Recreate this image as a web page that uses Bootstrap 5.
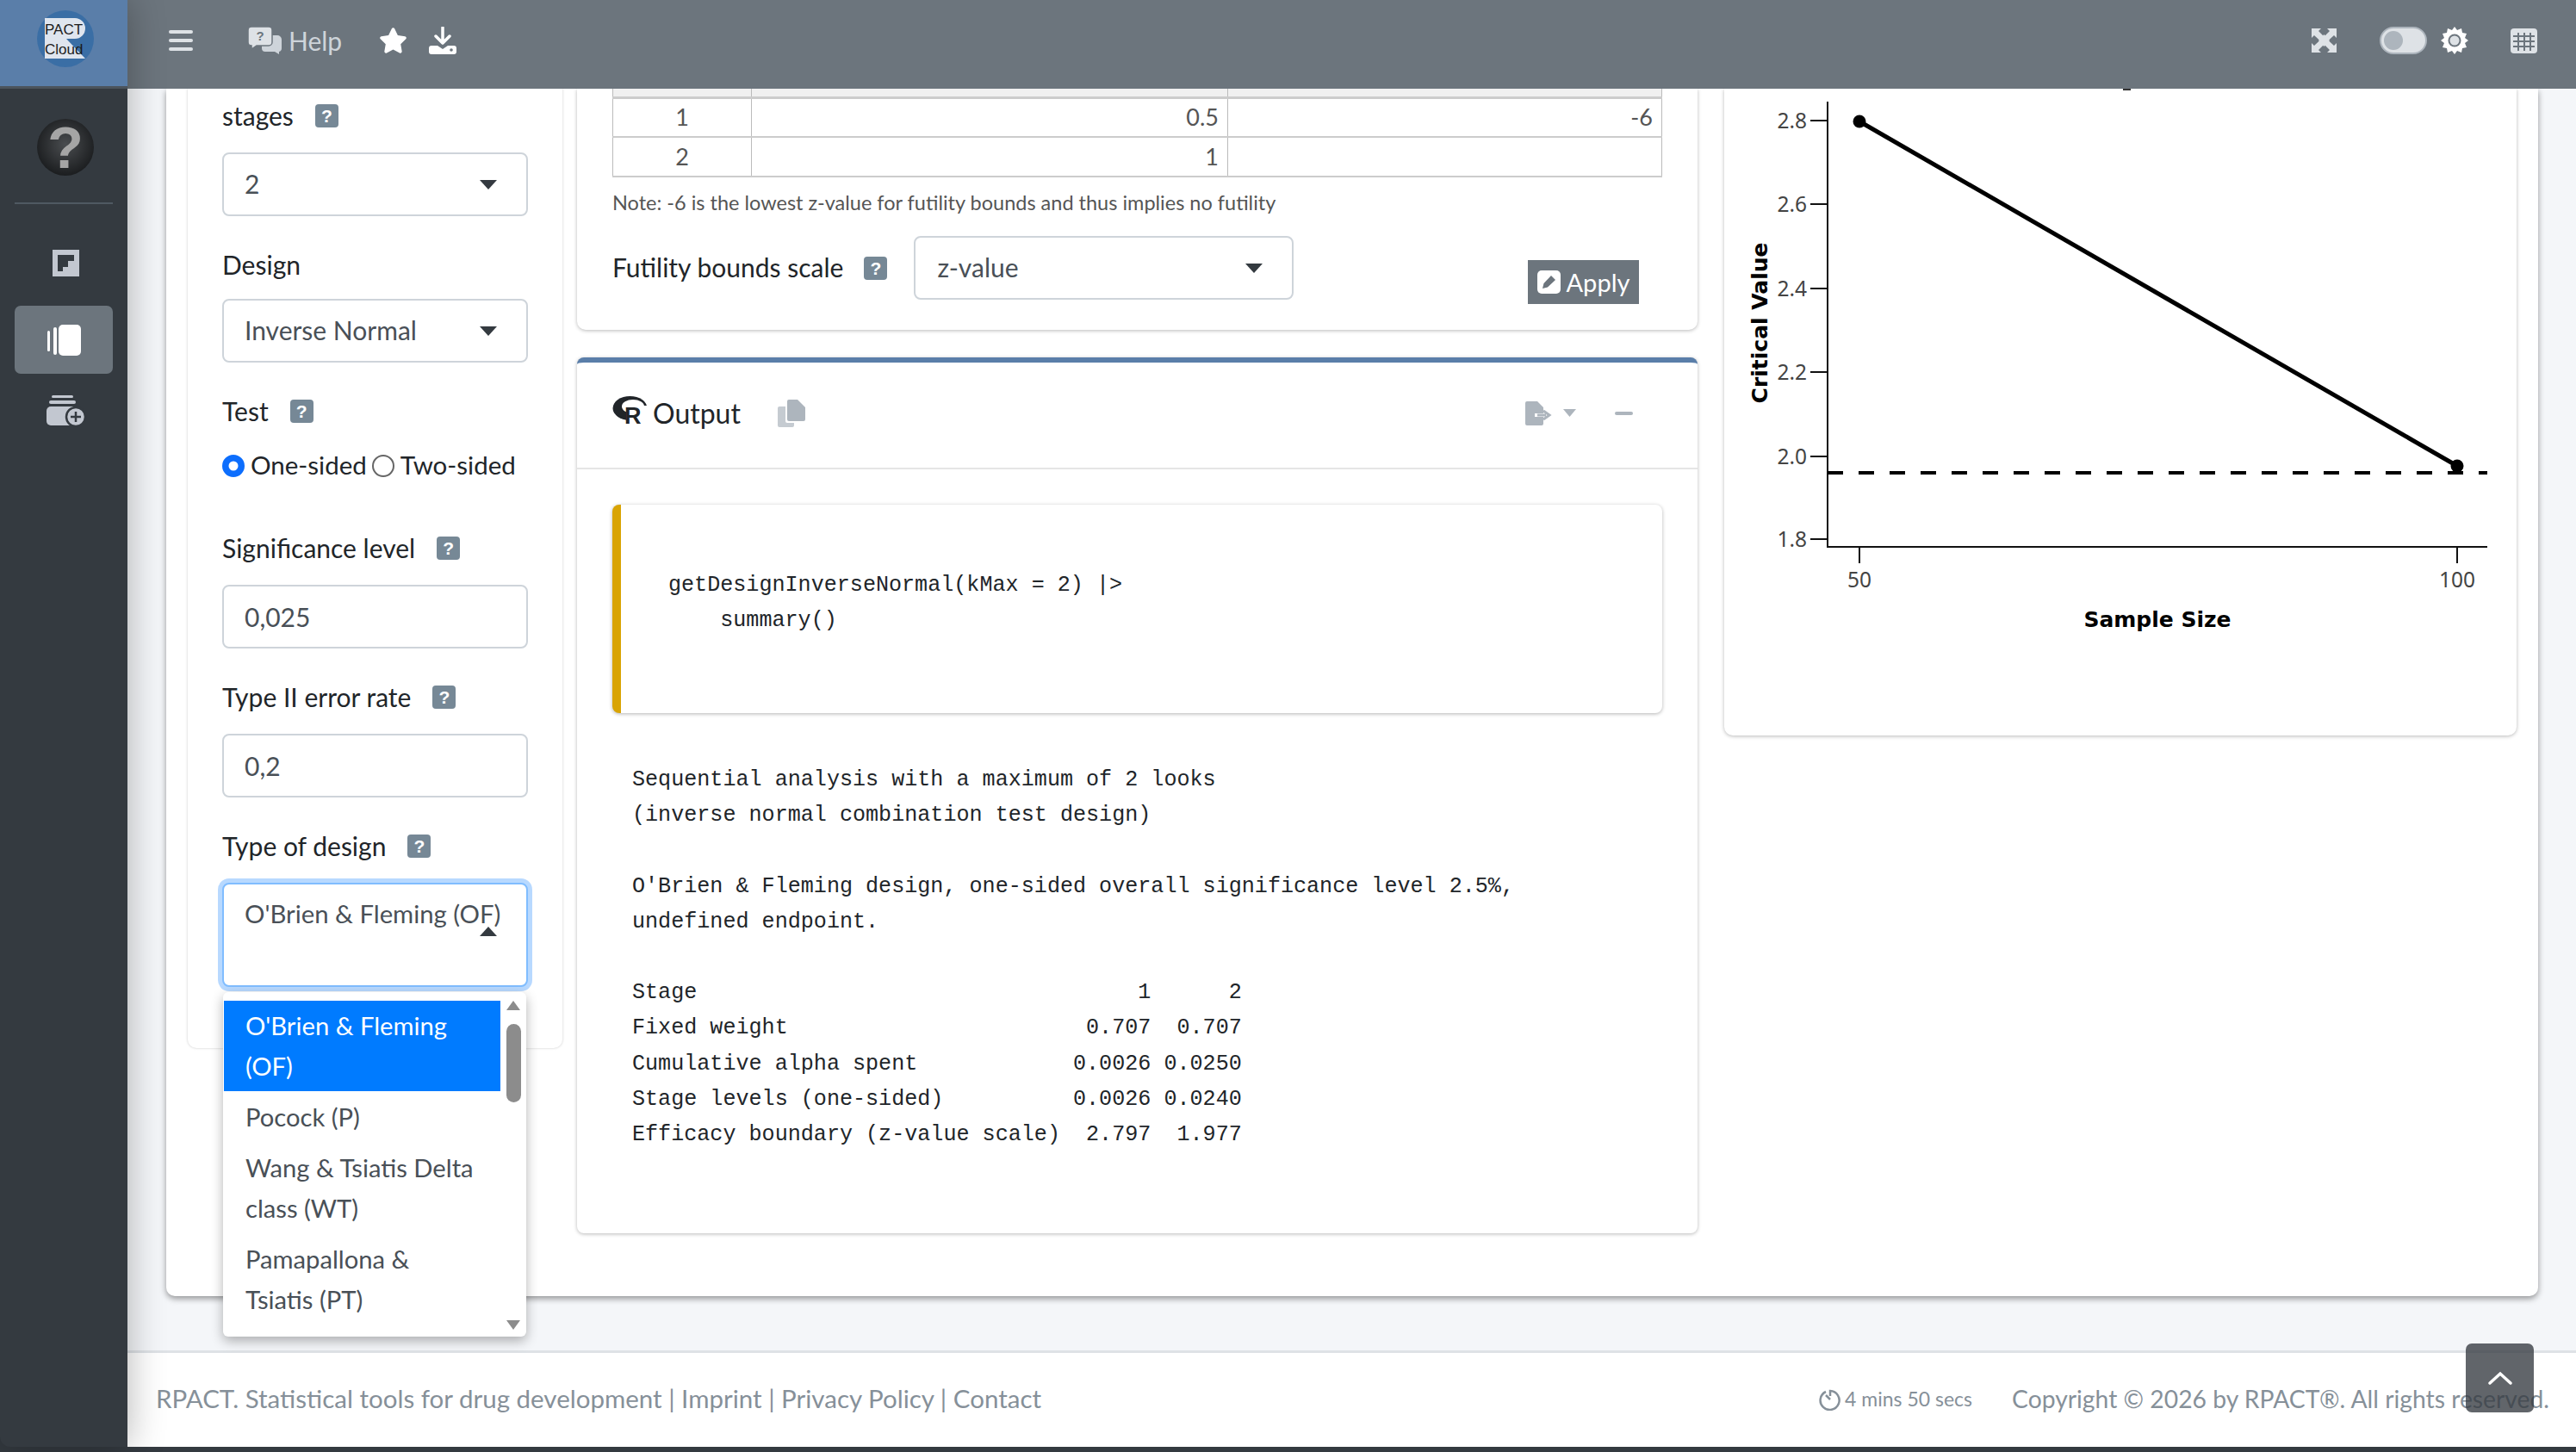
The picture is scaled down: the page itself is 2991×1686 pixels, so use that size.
<!DOCTYPE html>
<html lang="en">
<head>
<meta charset="utf-8">
<title>RPACT Cloud</title>
<link href="https://cdn.jsdelivr.net/npm/bootstrap@5.3.0/dist/css/bootstrap.min.css" rel="stylesheet">
<style>
html,body{height:100%;margin:0}
body{background:#343a40;overflow:hidden;font-family:"Lato","Noto Sans",sans-serif;font-size:30px;color:#212529}
.app-shell{height:1680px;width:2991px;position:relative}
.side-bar{width:148px;background:#343a40;border-bottom-left-radius:12px;z-index:5;box-shadow:0 0 44px rgba(0,0,0,.3)}
.logo-box{height:103px;background:#5a7ea9;border-bottom:3px solid #4b545c}
.side-sep{height:2px;background:#4f5962;margin:0 17px}
.side-pill{height:79px;margin:0 17px;background:#6c757d;border-radius:7px}
.main-col{width:2843px;background:#f4f6f9}
.top-bar{height:103px;background:#6c757d;padding:0 45px 9px 48px;z-index:4;color:#ced4da}
.top-bar span.help-text{font-size:30px;margin-left:7px}
.switch-track{width:55px;height:32px;border-radius:16px;background:#dee2e6;border:2px solid #adb5bd;padding:3px}
.switch-knob{width:22px;height:22px;border-radius:50%;background:#adb5bd}
.page-body{padding:0 44px 0 45px;height:1465px;flex:none}
.outer-card{height:1402px;background:#fff;border-radius:0 0 10px 10px;box-shadow:0 3px 7px rgba(0,0,0,.4);padding:0 25px}
.left-pane{width:435px;height:1114px;flex:none;margin-right:17px;background:#fff;border-radius:0 0 10px 10px;box-shadow:0 0 3px rgba(0,0,0,.22);padding:10px 40px 0;position:relative}
.mid-pane{width:1301px;flex:none;margin-right:31px}
.right-pane{width:920px;flex:none;height:751px;background:#fff;border-radius:0 0 10px 10px;box-shadow:0 1px 4px rgba(0,0,0,.28);position:relative}
.fld-label{height:44px;line-height:44px;margin-bottom:20px;display:flex;align-items:center;font-size:30px;padding-bottom:3px}
.fld-label.tight{margin-bottom:17px}
.fld-group{margin-bottom:35px}
.help-tag{width:27px;height:27px;margin-left:25px;background:#768896;color:#fff;border-radius:4px;font:700 21px/27px "Liberation Sans",sans-serif;text-align:center;flex:none;position:relative;top:1px}
.fld-box{display:block;height:74px;width:100%;border:2px solid #ced4da;border-radius:8px;background:#fff;color:#495057;font-size:30px;padding:0 24px;line-height:69px;position:relative}
.fld-box:focus{box-shadow:none;border-color:#ced4da;color:#495057}
.fld-caret::after{content:"";position:absolute;right:34px;top:30px;border:10px solid transparent;border-top:11px solid #343a40;border-bottom:0}
.fld-open{height:121px;border-color:#80bdff;box-shadow:0 0 0 5px #b8d9ff;line-height:1.3;padding-top:15px;font-size:29.300px}
.fld-open::after{content:"";position:absolute;right:34px;top:49px;border:10px solid transparent;border-bottom:11px solid #343a40;border-top:0}
.fld-radios{display:flex;align-items:center;height:44px;margin-bottom:51px;font-size:29.500px;padding-bottom:3px}
.fld-radios .form-check-input{width:26px;height:26px;margin:0 7px 0 0;flex:none;border:2px solid #666}
.fld-radios .form-check-input:checked{border-color:#0d6efd}
.fld-radios label{margin-right:6px}
.drop-menu{position:absolute;left:41px;top:1049px;width:352px;height:400px;background:#fff;border-radius:6px;box-shadow:0 5px 14px rgba(0,0,0,.3);padding-top:10px;z-index:6;font-size:29.200px;line-height:47px;color:#495057;overflow:hidden}
.drop-item{width:321px;padding:6px 24px 6px 25px;margin-left:1px}
.drop-item.on{background:#007bff;color:#fff;padding:5px 24px 6px 25px}
.drop-track{position:absolute;right:6px;top:8px;width:18px;height:384px}
.drop-thumb{position:absolute;left:1px;top:29px;width:17px;height:91px;border-radius:9px;background:#8c8c8c}
.tri-up,.tri-down{position:absolute;left:1px;border:8px solid transparent}
.tri-up{top:2px;border-bottom:11px solid #8c8c8c;border-top:0}
.tri-down{bottom:0;border-top:11px solid #8c8c8c;border-bottom:0}
.table-card{height:280px;background:#fff;border-radius:0 0 10px 10px;box-shadow:0 1px 4px rgba(0,0,0,.28);padding:0 42px 0 41px}
.bound-table{width:1218px;border-collapse:collapse;margin:0;color:#555;font-size:27px;table-layout:fixed}
.bound-table td{border:1px solid #bbb;border-bottom:2px solid #ccc;height:46px;padding:0 10px;line-height:40px}
.bound-table tr.head td{height:10px;background:#f0f0f0;padding:0;line-height:0;border-bottom:3px solid #ccc;border-top:0}
.note-line{font-size:23.500px;color:#555;margin:12px 0 0;line-height:34px}
.scale-row{margin-top:22px}
.scale-label{font-size:30px;margin-top:14px;display:flex;align-items:center;height:44px}
.scale-label .help-tag{margin-left:24px}
.scale-select{width:441px;margin-left:31px;padding:0 25px}
.apply-btn{margin-left:auto;margin-right:26px;margin-top:28px;height:51px;width:129px;background:#6c757d;color:#fff;border:0;border-radius:0;font-size:29px;padding:0;display:flex;align-items:center;justify-content:center;gap:7px;line-height:1}
.apply-btn:hover{background:#6c757d;color:#fff}
.out-card{margin-top:32px;height:1017px;background:#fff;border-top:6px solid #5a7ea9;border-radius:8px;box-shadow:0 1px 4px rgba(0,0,0,.28)}
.out-head{height:124px;border-bottom:2px solid #e5e5e5;padding:0 42px 5px 41px;font-size:32px}
.out-title{margin-left:6px;margin-right:43px}
.code-box{margin:41px 41px 0;height:242px;background:#fff;border-left:10px solid #d9a404;border-radius:8px;box-shadow:0 1px 4px rgba(0,0,0,.3);padding:73px 0 0 55px}
.mono-text{font-family:"Liberation Mono",monospace;font-size:25.100px;line-height:41.200px;margin:0;color:#212529;white-space:pre;overflow:visible}
.out-text{margin:57px 0 0 64px}
.bottom-bar{height:112px;background:#fff;border-top:3px solid #dee2e6;padding:0 31px 2px 33px;color:#869099;font-size:29.500px;flex:none}
.bottom-bar .run-time{font-size:23px;margin-left:auto;margin-right:46px}
.copy-note{font-size:28.300px}
.to-top{position:absolute;left:2863px;top:1560px;width:79px;height:80px;background:rgba(52,58,64,.78);border-radius:7px;z-index:7}
</style>
</head>
<body>
<div class="app-shell d-flex">
  <aside class="side-bar d-flex flex-column flex-none">
    <div class="logo-box d-flex align-items-center justify-content-center">
      <svg width="148" height="100" viewBox="0 0 148 100">
        <circle cx="76" cy="45" r="33" fill="#3a6ea5"/>
        <path d="M52 21H87A12 12 0 0 1 87 45H77L99 68H52Z" fill="#dfe5ee"/>
        <text x="52" y="40" font-family="Liberation Sans" font-size="17" fill="#1c1c1c">PACT</text>
        <text x="52" y="63" font-family="Liberation Sans" font-size="17" fill="#1c1c1c">Cloud</text>
      </svg>
    </div>
    <div class="d-flex justify-content-center mt-0">
      <svg width="148" height="132" viewBox="0 0 148 132" class="d-block">
        <defs><radialGradient id="ballg" cx=".5" cy=".45" r=".6"><stop offset="0" stop-color="#4a4d50"/><stop offset="1" stop-color="#17191b"/></radialGradient></defs>
        <ellipse cx="76" cy="68" rx="33" ry="33" fill="url(#ballg)"/>
        <text x="76" y="92" text-anchor="middle" font-family="Liberation Sans" font-weight="700" font-size="68" fill="#a5a5a5">?</text>
      </svg>
    </div>
    <div class="side-sep"></div>
    <div class="d-flex justify-content-center">
      <svg width="148" height="118" viewBox="0 0 148 118" class="d-block">
        <path d="M61 53H92V84H61Z" fill="#c2c7d0"/>
        <path d="M67 59H86V66H79V73H73V78H67Z" fill="#343a40"/>
      </svg>
    </div>
    <div class="side-pill d-flex align-items-center justify-content-center">
      <svg width="44" height="40" viewBox="0 0 44 40">
        <rect x="3" y="9" width="3" height="24" rx="1.5" fill="#fff"/>
        <rect x="10" y="5" width="4" height="32" rx="2" fill="#fff"/>
        <rect x="16" y="2" width="26" height="36" rx="5" fill="#fff"/>
      </svg>
    </div>
    <div class="d-flex justify-content-center">
      <svg width="148" height="70" viewBox="0 0 148 70" class="d-block">
        <rect x="60" y="25" width="25" height="3" rx="1.5" fill="#c2c7d0"/>
        <rect x="57" y="31" width="31" height="4" rx="2" fill="#c2c7d0"/>
        <rect x="54" y="38" width="36" height="22" rx="5" fill="#c2c7d0"/>
        <circle cx="88" cy="50" r="11" fill="#c2c7d0" stroke="#343a40" stroke-width="2.5"/>
        <path d="M88 44V56M82 50H94" stroke="#343a40" stroke-width="2.5"/>
      </svg>
    </div>
  </aside>

  <div class="main-col d-flex flex-column">
    <header class="top-bar d-flex align-items-center flex-none position-relative">
      <svg width="28" height="24" viewBox="0 0 28 24"><rect y="0" width="28" height="4" rx="2" fill="#dee2e6"/><rect y="10" width="28" height="4" rx="2" fill="#dee2e6"/><rect y="20" width="28" height="4" rx="2" fill="#dee2e6"/></svg>
      <svg width="40" height="32" viewBox="0 0 40 32" style="margin-left:64px">
        <path d="M18 10h16a5 5 0 0 1 5 5v10a4 4 0 0 1-3 4v3l-5-3H20a4 4 0 0 1-4-4V14z" fill="#ced4da"/>
        <path d="M4 0h20a4 4 0 0 1 4 4v14a4 4 0 0 1-4 4H10l-6 4v-4a4 4 0 0 1-4-4V4a4 4 0 0 1 4-4z" fill="#dee2e6" stroke="#6c757d" stroke-width="1.5"/>
        <text x="14" y="16" text-anchor="middle" font-family="Liberation Sans" font-weight="700" font-size="15" fill="#6c757d">?</text>
      </svg>
      <span class="help-text">Help</span>
      <svg width="33" height="32" viewBox="0 0 576 512" style="margin-left:43px"><path fill="#fff" d="M259.3 17.8L194 150.2 47.9 171.5c-26.2 3.8-36.7 36.1-17.7 54.6l105.7 103-25 145.5c-4.5 26.3 23.2 46 46.4 33.7L288 439.6l130.7 68.7c23.2 12.2 50.9-7.4 46.4-33.7l-25-145.5 105.7-103c19-18.5 8.5-50.8-17.7-54.6L382 150.2 316.7 17.8c-11.7-23.6-45.6-23.9-57.4 0z"/></svg>
      <svg width="32" height="32" viewBox="0 0 32 32" style="margin-left:25px">
        <path d="M16 1V18M8 11l8 8 8-8" fill="none" stroke="#fff" stroke-width="3.5" stroke-linecap="round" stroke-linejoin="round"/>
        <path d="M3 22h7l6 4 6-4h7a3 3 0 0 1 3 3v4a3 3 0 0 1-3 3H3a3 3 0 0 1-3-3v-4a3 3 0 0 1 3-3z" fill="#fff"/>
        <circle cx="26" cy="27" r="1.8" fill="#6c757d"/>
      </svg>
      <svg class="ms-auto" width="29" height="28" viewBox="0 0 29 28">
        <path d="M0 0H11L8 3 14.500 9.500 21 3 18 0H29V11L26 8 19.500 14 26 20 29 17V28H18L21 25 14.500 18.500 8 25 11 28H0V17L3 20 9.500 14 3 8 0 11Z" fill="#dee2e6"/>
        <path d="M14.500 7L21 14 14.500 21 8 14Z" fill="#dee2e6"/>
      </svg>
      <div class="switch-track" style="margin-left:50px"><div class="switch-knob"></div></div>
      <svg width="32" height="32" viewBox="0 0 32 32" style="margin-left:16px">
        <path d="M16 0l3 4 5-2 1 5 5 1-2 5 4 3-4 3 2 5-5 1-1 5-5-2-3 4-3-4-5 2-1-5-5-1 2-5-4-3 4-3-2-5 5-1 1-5 5 2z" fill="#fff"/>
        <circle cx="16" cy="16" r="7.5" fill="#6c757d"/>
        <circle cx="16" cy="16" r="5.5" fill="#dee2e6"/>
      </svg>
      <svg width="31" height="29" viewBox="0 0 31 29" style="margin-left:49px">
        <rect width="31" height="29" rx="4" fill="#dee2e6"/>
        <path d="M9 5v21M16 5v21M23 5v21M3 9h25M3 15h25M3 21h25" stroke="#6c757d" stroke-width="2"/>
      </svg>
    </header>

    <div class="page-body">
      <div class="outer-card d-flex">
        <section class="left-pane">
          <div class="fld-group">
            <div class="fld-label">stages<span class="help-tag">?</span></div>
            <div class="fld-box fld-caret">2</div>
          </div>
          <div class="fld-group">
            <div class="fld-label tight">Design</div>
            <div class="fld-box fld-caret">Inverse Normal</div>
          </div>
          <div class="fld-label">Test<span class="help-tag">?</span></div>
          <div class="fld-radios">
            <input class="form-check-input" type="radio" name="sided" id="r1" checked>
            <label for="r1">One-sided</label>
            <input class="form-check-input" type="radio" name="sided" id="r2">
            <label for="r2">Two-sided</label>
          </div>
          <div class="fld-group">
            <div class="fld-label">Significance level<span class="help-tag">?</span></div>
            <input class="fld-box form-control" value="0,025">
          </div>
          <div class="fld-group">
            <div class="fld-label">Type II error rate<span class="help-tag">?</span></div>
            <input class="fld-box form-control" value="0,2">
          </div>
          <div class="fld-label">Type of design<span class="help-tag">?</span></div>
          <div class="fld-box fld-open">O'Brien &amp; Fleming (OF)</div>
          <div class="drop-menu">
            <div class="drop-item on">O'Brien &amp; Fleming (OF)</div>
            <div class="drop-item">Pocock (P)</div>
            <div class="drop-item">Wang &amp; Tsiatis Delta class (WT)</div>
            <div class="drop-item">Pamapallona &amp; Tsiatis (PT)</div>
            <div class="drop-track"><span class="tri-up"></span><span class="drop-thumb"></span><span class="tri-down"></span></div>
          </div>
        </section>

        <section class="mid-pane">
          <div class="table-card">
            <table class="bound-table">
              <colgroup><col width="161"><col width="553"><col width="504"></colgroup>
              <tr class="head"><td></td><td></td><td></td></tr>
              <tr><td class="text-center">1</td><td class="text-end">0.5</td><td class="text-end">-6</td></tr>
              <tr><td class="text-center">2</td><td class="text-end">1</td><td></td></tr>
            </table>
            <p class="note-line">Note: -6 is the lowest z-value for futility bounds and thus implies no futility</p>
            <div class="scale-row d-flex align-items-start">
              <div class="scale-label">Futility bounds scale<span class="help-tag">?</span></div>
              <div class="fld-box fld-caret scale-select">z-value</div>
              <button class="btn apply-btn" type="button">
                <svg width="27" height="27" viewBox="0 0 27 27"><rect width="27" height="27" rx="5" fill="#fff"/><path d="M6 21l1.500-6L16 6l5 5-9 8.500z" fill="#6c757d"/></svg>Apply
              </button>
            </div>
          </div>
          <div class="out-card">
            <div class="out-head d-flex align-items-center">
              <svg width="41" height="42" viewBox="0 0 41 42">
                <ellipse cx="20.500" cy="15" rx="20" ry="14" fill="#212529"/>
                <ellipse cx="24" cy="13" rx="13" ry="8" fill="#fff"/>
                <rect x="16" y="12" width="25" height="24" fill="#fff"/>
                <text x="14" y="33" font-family="Liberation Sans" font-weight="700" font-size="27" fill="#212529">R</text>
              </svg>
              <span class="out-title">Output</span>
              <svg width="32" height="32" viewBox="0 0 32 32">
                <path d="M13 0h10l9 9v14a2 2 0 0 1-2 2H13a2 2 0 0 1-2-2V2a2 2 0 0 1 2-2z" fill="#adb5bd"/>
                <path d="M9 8H2a2 2 0 0 0-2 2v20a2 2 0 0 0 2 2h15a2 2 0 0 0 2-2v-3h-8a2 2 0 0 1-2-2z" fill="#c5cbd1"/>
              </svg>
              <svg class="ms-auto" width="34" height="28" viewBox="0 0 34 28">
                <path d="M2 0h12l7 7v7H11v4h10v8a2 2 0 0 1-2 2H2a2 2 0 0 1-2-2V2a2 2 0 0 1 2-2z" fill="#adb5bd"/>
                <path d="M14 16H24M21 11l7 5-7 5" fill="none" stroke="#adb5bd" stroke-width="3"/>
              </svg>
              <svg width="15" height="9" viewBox="0 0 15 9" style="margin-left:10px"><path d="M0 0H15L7.500 9Z" fill="#adb5bd"/></svg>
              <svg width="21" height="4" viewBox="0 0 21 4" style="margin-left:45px;margin-right:33px"><rect width="21" height="4" rx="2" fill="#adb5bd"/></svg>
            </div>
            <div class="code-box"><pre class="mono-text">getDesignInverseNormal(kMax = 2) |&gt;
    summary()</pre></div>
            <pre class="mono-text out-text">Sequential analysis with a maximum of 2 looks
(inverse normal combination test design)

O'Brien &amp; Fleming design, one-sided overall significance level 2.5%,
undefined endpoint.

Stage                                  1      2
Fixed weight                       0.707  0.707
Cumulative alpha spent            0.0026 0.0250
Stage levels (one-sided)          0.0026 0.0240
Efficacy boundary (z-value scale)  2.797  1.977</pre>
          </div>
        </section>

        <section class="right-pane">
          <svg width="920" height="751" viewBox="2002 103 920 751" class="d-block">
            <rect x="2465" y="103" width="9" height="2" fill="#333"/>
            <g stroke="#111" stroke-width="2" fill="none">
              <path d="M2122 118V635H2888"/>
              <path d="M2102 140H2122M2102 237H2122M2102 335H2122M2102 432H2122M2102 530H2122M2102 626H2122"/>
              <path d="M2159 635V654M2853 635V654"/>
            </g>
            <g font-family="Noto Sans" font-size="24.500" fill="#444" text-anchor="end">
              <text x="2098" y="149">2.8</text><text x="2098" y="246">2.6</text><text x="2098" y="344">2.4</text>
              <text x="2098" y="441">2.2</text><text x="2098" y="539">2.0</text><text x="2098" y="635">1.8</text>
            </g>
            <g font-family="Noto Sans" font-size="24.500" fill="#444" text-anchor="middle">
              <text x="2159" y="682">50</text><text x="2853" y="682">100</text>
            </g>
            <path d="M2159 141L2853 541" stroke="#000" stroke-width="5" fill="none"/>
            <path d="M2122 549H2888" stroke="#000" stroke-width="4" stroke-dasharray="18 18" fill="none"/>
            <circle cx="2159" cy="141" r="7.500" fill="#000"/>
            <circle cx="2853" cy="541" r="7.500" fill="#000"/>
            <text x="2505" y="728" text-anchor="middle" font-family="DejaVu Sans" font-weight="700" font-size="25" fill="#000">Sample Size</text>
            <text transform="translate(2052 375) rotate(-90)" text-anchor="middle" font-family="DejaVu Sans" font-weight="700" font-size="25" fill="#000">Critical Value</text>
          </svg>
        </section>
      </div>
    </div>

    <footer class="bottom-bar d-flex align-items-center">
      <span>RPACT. Statistical tools for drug development | Imprint | Privacy Policy | Contact</span>
      <span class="run-time d-inline-flex align-items-center gap-1">
        <svg width="26" height="26" viewBox="0 0 26 26"><path d="M8 4a11 11 0 1 0 5-1v6" fill="none" stroke="#869099" stroke-width="2.500"/><path d="M8 8l5 5" stroke="#869099" stroke-width="2.500"/></svg>4 mins 50 secs
      </span>
      <span class="copy-note">Copyright © 2026 by RPACT®. All rights reserved.</span>
    </footer>
  </div>
  <div class="to-top d-flex align-items-center justify-content-center">
    <svg width="28" height="16" viewBox="0 0 28 16"><path d="M2 14L14 3l12 11" fill="none" stroke="#fff" stroke-width="3.500" stroke-linecap="round"/></svg>
  </div>
</div>
<script src="https://cdn.jsdelivr.net/npm/bootstrap@5.3.0/dist/js/bootstrap.bundle.min.js"></script>
</body>
</html>
